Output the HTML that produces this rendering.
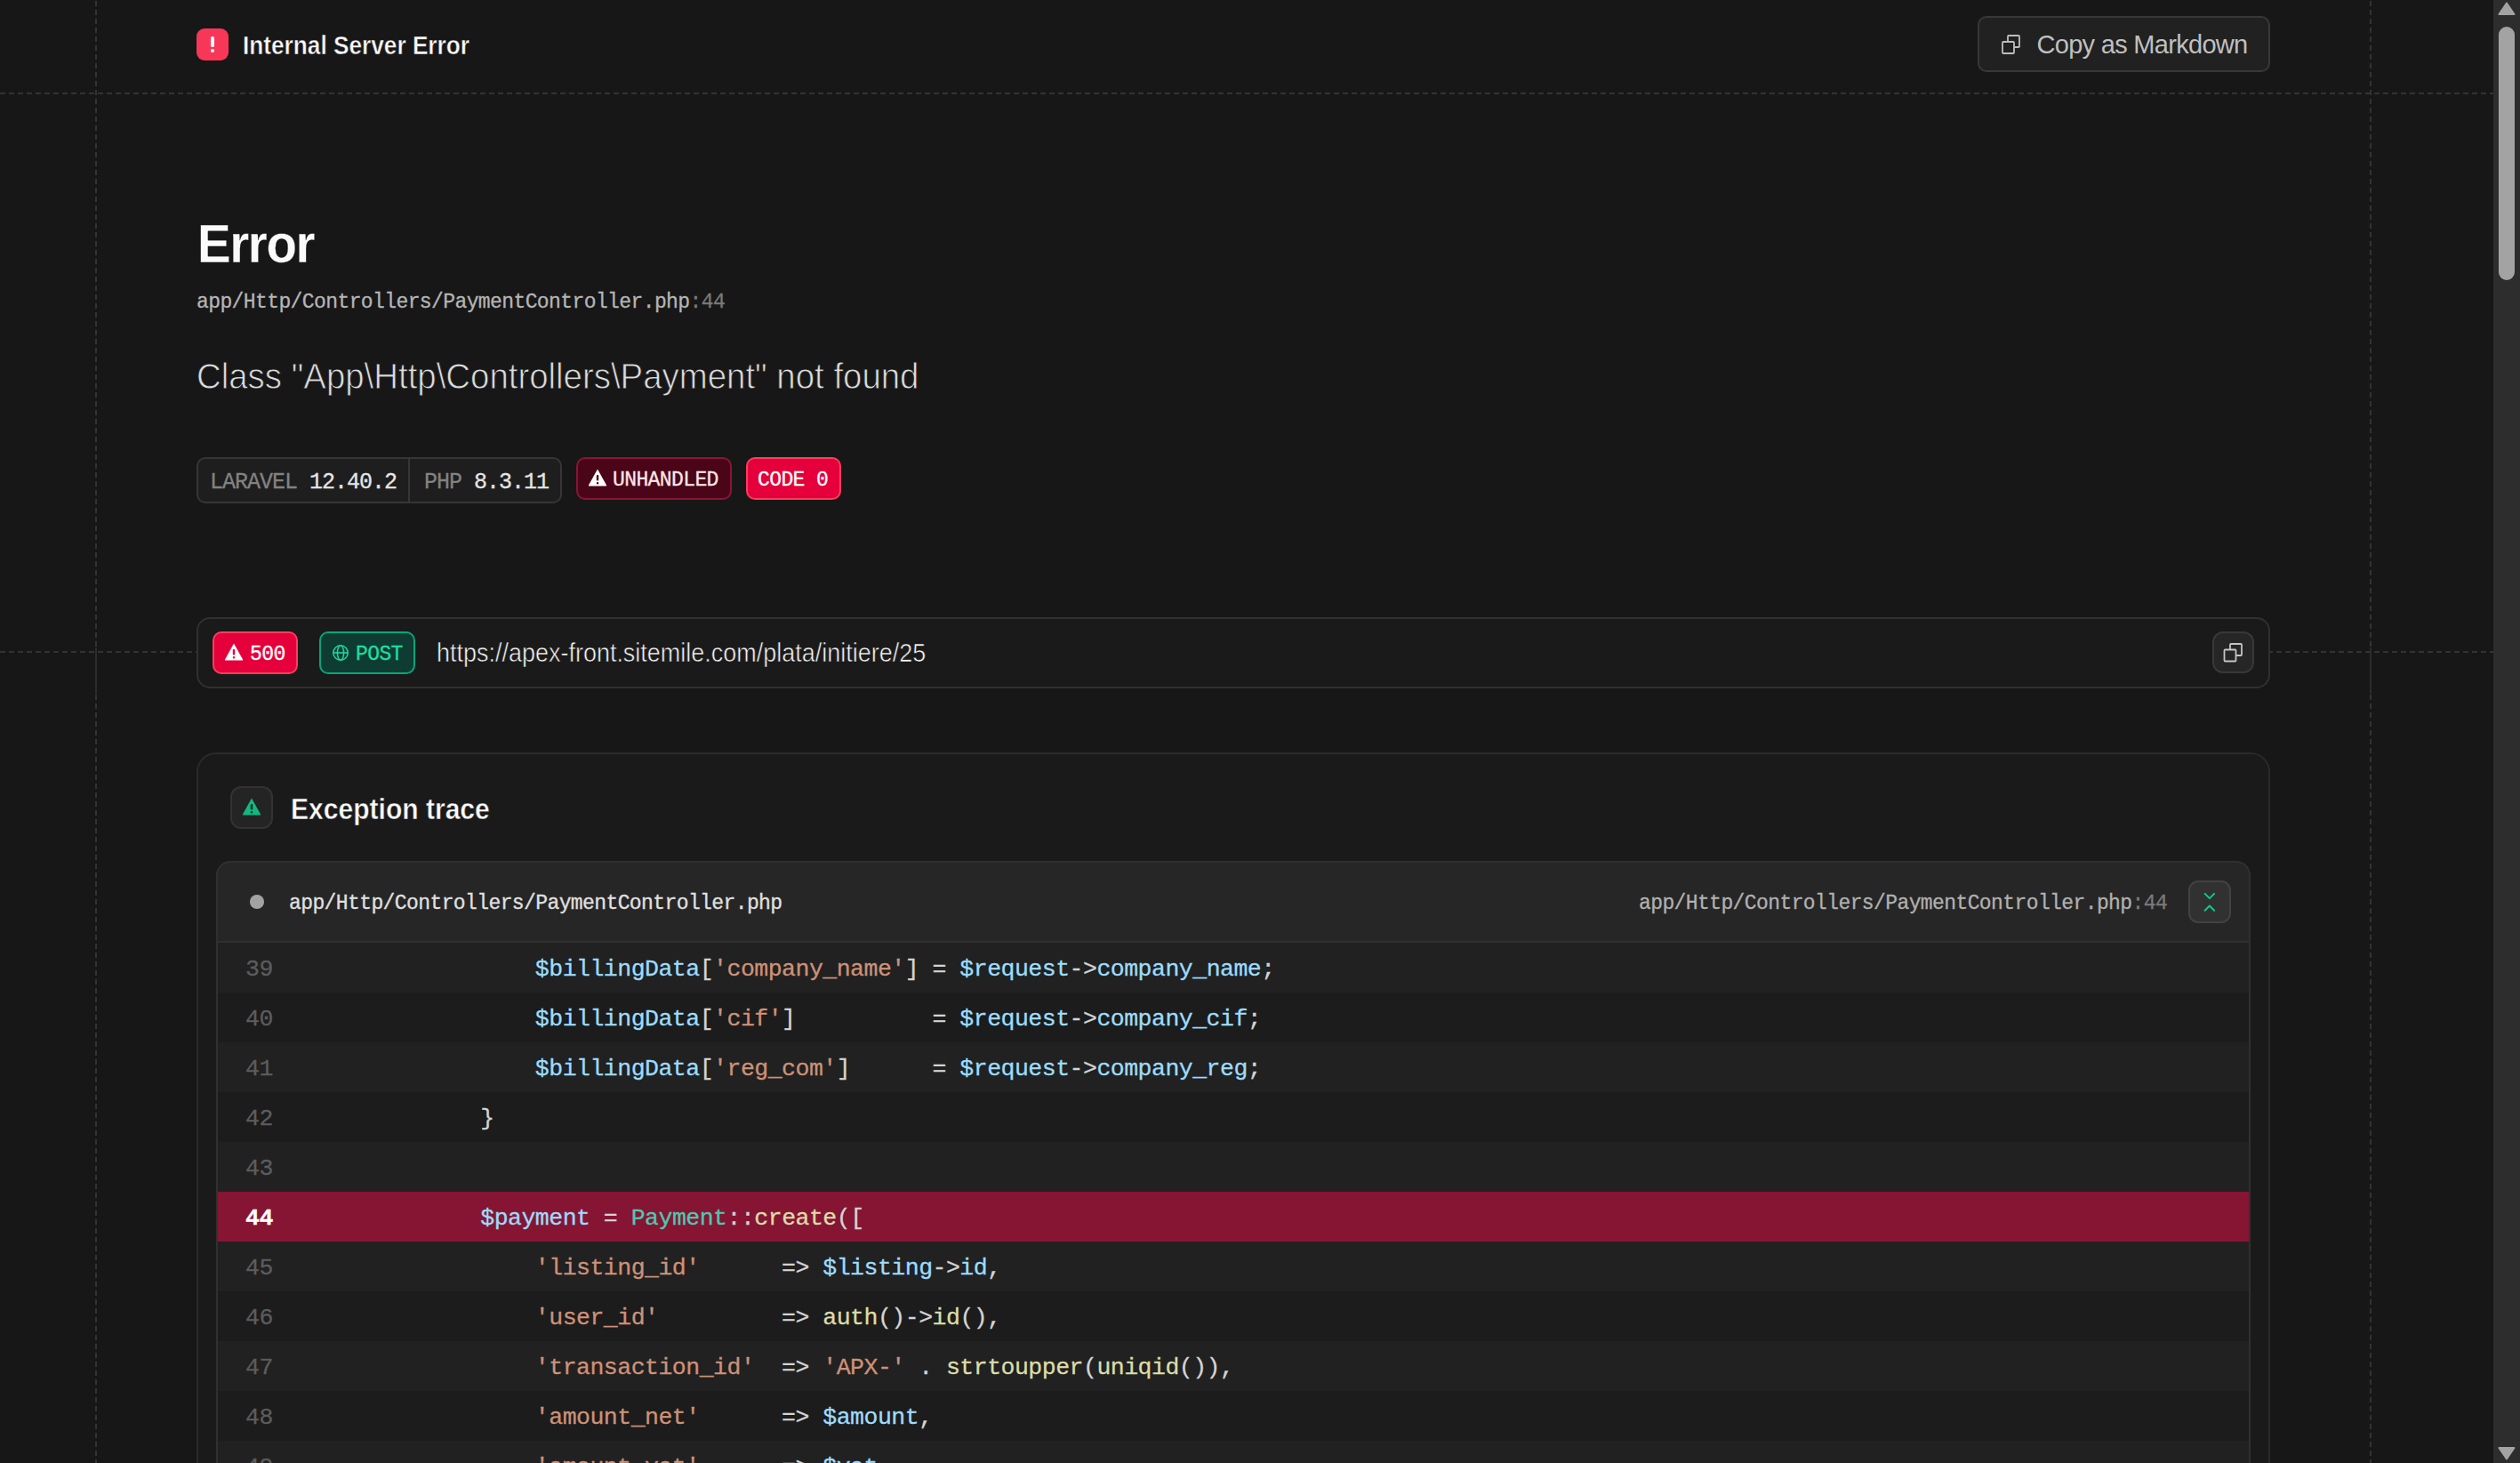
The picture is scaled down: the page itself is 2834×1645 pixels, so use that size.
<!DOCTYPE html>
<html>
<head>
<meta charset="utf-8">
<style>
html,body{margin:0;padding:0;}
body{width:2834px;height:1645px;overflow:hidden;background:#171717;position:relative;font-family:"Liberation Sans",sans-serif;}
.a{position:absolute;}
.t{position:absolute;white-space:pre;}
.mono{font-family:"Liberation Mono",monospace;-webkit-text-stroke:0.3px currentColor;}
.vd{position:absolute;width:2px;background:repeating-linear-gradient(to bottom,#333 0 6px,transparent 6px 10px);}
.hd{position:absolute;height:2px;background:repeating-linear-gradient(to right,#333 0 6px,transparent 6px 10px);}
.row{position:absolute;left:0;right:0;height:56px;}
.ln{position:absolute;left:31px;top:2px;line-height:56px;font-family:"Liberation Mono",monospace;font-size:26.5px;letter-spacing:-0.5px;color:#5c5c5c;white-space:pre;-webkit-text-stroke:0.3px currentColor;}
.cd{position:absolute;left:172px;top:2px;line-height:56px;font-family:"Liberation Mono",monospace;font-size:26.5px;letter-spacing:-0.5px;color:#d4d4d4;white-space:pre;-webkit-text-stroke:0.3px currentColor;}
.v{color:#9cdcfe}.s{color:#ce9178}.f{color:#dcdcaa}.c{color:#4ec9b0}
</style>
</head>
<body>
<!-- grid lines -->
<div class="vd" style="left:107px;top:1px;height:1644px;"></div>
<div class="vd" style="left:2665px;top:1px;height:1644px;"></div>
<div class="hd" style="left:0;top:104px;width:2804px;"></div>
<div class="hd" style="left:0;top:732px;width:2804px;"></div>
<div class="a" style="left:107px;top:728px;width:2px;height:52px;background:#2c2c2c;"></div>
<div class="a" style="left:2665px;top:728px;width:2px;height:52px;background:#2c2c2c;"></div>

<!-- header -->
<div class="a" style="left:221px;top:32px;width:36px;height:36px;border-radius:9px;background:#f83758;">
  <div class="a" style="left:16.3px;top:9.3px;width:3.4px;height:11.5px;border-radius:1.7px;background:#fff;"></div>
  <div class="a" style="left:15.9px;top:23px;width:4.2px;height:4.2px;border-radius:50%;background:#fff;"></div>
</div>
<div class="t" style="left:273px;top:37px;font-size:29px;line-height:29px;font-weight:700;color:#fafafa;transform:scaleX(0.904);transform-origin:0 0;-webkit-text-stroke:0.5px #171717;">Internal Server Error</div>

<div class="a" style="left:2224px;top:18px;width:325px;height:59px;border:2px solid #383838;border-radius:10px;background:#212121;"></div>
<svg class="a" style="left:2249px;top:38px;" width="26" height="26" viewBox="0 0 26 26" fill="none" stroke="#bdbdbd" stroke-width="1.8">
  <rect x="9" y="2" width="13" height="13" rx="1"/>
  <rect x="3" y="9" width="13" height="13" rx="1" fill="#212121"/>
</svg>
<div class="t" style="left:2290.5px;top:36px;font-size:29px;line-height:29px;color:#bfbfbf;letter-spacing:-0.7px;">Copy as Markdown</div>

<!-- title -->
<div class="t" style="left:222px;top:243px;font-size:62px;line-height:62px;font-weight:700;color:#fafafa;letter-spacing:-1.5px;transform:scaleX(0.91);transform-origin:0 0;-webkit-text-stroke:0.3px #171717;">Error</div>
<div class="t mono" style="left:221px;top:329px;font-size:23px;line-height:23px;color:#b5b5b5;letter-spacing:-0.6px;">app/Http/Controllers/PaymentController.php<span style="color:#7a7a7a">:44</span></div>
<div class="t" style="left:221px;top:402px;font-size:41.5px;line-height:41.5px;color:#dcdcdc;transform:scaleX(0.925);transform-origin:0 0;-webkit-text-stroke:0.9px #171717;">Class "App\Http\Controllers\Payment" not found</div>

<!-- badges -->
<div class="a" style="left:221px;top:514px;width:407px;height:48px;border:2px solid #363636;border-radius:10px;background:#1e1e1e;"></div>
<div class="a" style="left:459px;top:516px;width:2px;height:48px;background:#363636;"></div>
<div class="t mono" style="left:236px;top:530px;font-size:25px;line-height:25px;color:#828282;letter-spacing:-1px;">LARAVEL <span style="color:#e5e5e5">12.40.2</span></div>
<div class="t mono" style="left:477px;top:530px;font-size:25px;line-height:25px;color:#828282;letter-spacing:-1px;">PHP <span style="color:#e5e5e5">8.3.11</span></div>

<div class="a" style="left:648px;top:514px;width:171px;height:44px;border:2px solid #8a1538;border-radius:10px;background:#4a0519;"></div>
<svg class="a" style="left:661px;top:527px;" width="22" height="21" viewBox="0 0 22 21">
  <path d="M11 0.6 L21 18.6 Q21.5 19.6 20.4 19.6 L1.6 19.6 Q0.5 19.6 1 18.6 Z" fill="#ffffff"/>
  <rect x="9.8" y="7" width="2.4" height="6.5" rx="1" fill="#4a0519"/>
  <rect x="9.8" y="15" width="2.4" height="2.4" rx="1" fill="#4a0519"/>
</svg>
<div class="t mono" style="left:689px;top:529px;font-size:23px;line-height:23px;color:#ffe4e6;letter-spacing:-0.6px;">UNHANDLED</div>

<div class="a" style="left:839px;top:514px;width:103px;height:44px;border:2px solid #ff3d5f;border-radius:10px;background:#e6003b;"></div>
<div class="t mono" style="left:852px;top:529px;font-size:23px;line-height:23px;color:#ffffff;letter-spacing:-0.6px;">CODE 0</div>

<!-- url bar -->
<div class="a" style="left:221px;top:694px;width:2328px;height:76px;border:2px solid #303030;border-radius:15px;background:#1a1a1a;"></div>
<div class="a" style="left:239px;top:710px;width:92px;height:44px;border:2px solid #ff3d5f;border-radius:10px;background:#e6003b;"></div>
<svg class="a" style="left:252px;top:723px;" width="22" height="21" viewBox="0 0 22 21">
  <path d="M11 0.6 L21 18.6 Q21.5 19.6 20.4 19.6 L1.6 19.6 Q0.5 19.6 1 18.6 Z" fill="#ffffff"/>
  <rect x="9.8" y="7" width="2.4" height="6.5" rx="1" fill="#e6003b"/>
  <rect x="9.8" y="15" width="2.4" height="2.4" rx="1" fill="#e6003b"/>
</svg>
<div class="t mono" style="left:281px;top:725px;font-size:23px;line-height:23px;color:#ffffff;letter-spacing:-0.6px;">500</div>

<div class="a" style="left:359px;top:710px;width:104px;height:44px;border:2px solid #05a77a;border-radius:10px;background:#0f3c32;"></div>
<svg class="a" style="left:373px;top:724px;" width="20" height="20" viewBox="0 0 20 20" fill="none" stroke="#1fd39b" stroke-width="1.6">
  <circle cx="10" cy="10" r="8.2"/>
  <ellipse cx="10" cy="10" rx="3.6" ry="8.2"/>
  <line x1="1.8" y1="10" x2="18.2" y2="10"/>
</svg>
<div class="t mono" style="left:400px;top:725px;font-size:23px;line-height:23px;color:#1fdea2;letter-spacing:-0.6px;">POST</div>

<div class="t" style="left:491px;top:720px;font-size:29px;line-height:29px;color:#f5f5f5;transform:scaleX(0.93);transform-origin:0 0;-webkit-text-stroke:0.6px #1a1a1a;">https://apex-front.sitemile.com/plata/initiere/25</div>

<div class="a" style="left:2488px;top:710px;width:43px;height:43px;border:2px solid #383838;border-radius:12px;background:#262626;"></div>
<svg class="a" style="left:2499px;top:722px;" width="24" height="24" viewBox="0 0 24 24" fill="none" stroke="#c4c4c4" stroke-width="1.8">
  <rect x="9" y="2" width="13" height="13" rx="1"/>
  <rect x="2.5" y="8.5" width="13" height="13" rx="1" fill="#262626"/>
</svg>

<!-- exception trace card -->
<div class="a" style="left:221px;top:846px;width:2328px;height:900px;border:2px solid #2a2a2a;border-radius:22px;background:#1a1a1a;"></div>
<div class="a" style="left:259px;top:884px;width:44px;height:44px;border:2px solid #333;border-radius:12px;background:#242424;"></div>
<svg class="a" style="left:272px;top:897px;" width="22" height="21" viewBox="0 0 22 21">
  <path d="M11 0.6 L21 18.6 Q21.5 19.6 20.4 19.6 L1.6 19.6 Q0.5 19.6 1 18.6 Z" fill="#10b981"/>
  <rect x="9.8" y="7" width="2.4" height="6.5" rx="1" fill="#242424"/>
  <rect x="9.8" y="15" width="2.4" height="2.4" rx="1" fill="#242424"/>
</svg>
<div class="t" style="left:327px;top:893px;font-size:33.7px;line-height:33.7px;font-weight:700;color:#fafafa;transform:scaleX(0.892);transform-origin:0 0;-webkit-text-stroke:0.5px #1a1a1a;">Exception trace</div>

<!-- frame -->
<div class="a" style="left:243px;top:968px;width:2284px;height:800px;border:2px solid #303030;border-radius:16px;background:#262626;overflow:hidden;">
  <div class="a" style="left:0;top:88px;width:100%;height:2px;background:#303030;"></div>
  <div class="a" style="left:36px;top:36px;width:16px;height:16px;border-radius:50%;background:#a3a3a3;"></div>
  <div class="t mono" style="left:80px;top:35px;font-size:23px;line-height:23px;color:#e0e0e0;letter-spacing:-0.6px;">app/Http/Controllers/PaymentController.php</div>
  <div class="t mono" style="left:1598px;top:35px;font-size:23px;line-height:23px;color:#b0b0b0;letter-spacing:-0.6px;">app/Http/Controllers/PaymentController.php<span style="color:#7a7a7a">:44</span></div>
  <div class="a" style="left:2216px;top:20px;width:44px;height:44px;border:2px solid #424242;border-radius:11px;background:#313131;"></div>
  <svg class="a" style="left:2230px;top:30px;" width="22" height="28" viewBox="0 0 22 28" fill="none" stroke="#0cc98f" stroke-width="2" stroke-linecap="round" stroke-linejoin="round">
    <path d="M4.7 4.9 L9.9 10.1 L15.1 4.9"/>
    <path d="M4.7 23.7 L9.9 18.5 L15.1 23.7"/>
  </svg>

  <div class="a" style="left:0;top:90px;width:100%;height:800px;">
    <div class="row" style="top:0;background:#212121;"><div class="ln">39</div><div class="cd">            <span class="v">$billingData</span>[<span class="s">'company_name'</span>] = <span class="v">$request</span>-&gt;<span class="v">company_name</span>;</div></div>
    <div class="row" style="top:56px;background:#1c1c1c;"><div class="ln">40</div><div class="cd">            <span class="v">$billingData</span>[<span class="s">'cif'</span>]          = <span class="v">$request</span>-&gt;<span class="v">company_cif</span>;</div></div>
    <div class="row" style="top:112px;background:#212121;"><div class="ln">41</div><div class="cd">            <span class="v">$billingData</span>[<span class="s">'reg_com'</span>]      = <span class="v">$request</span>-&gt;<span class="v">company_reg</span>;</div></div>
    <div class="row" style="top:168px;background:#1c1c1c;"><div class="ln">42</div><div class="cd">        }</div></div>
    <div class="row" style="top:224px;background:#212121;"><div class="ln">43</div><div class="cd"></div></div>
    <div class="row" style="top:280px;background:#861533;"><div class="ln" style="color:#fff;font-weight:700;">44</div><div class="cd">        <span class="v">$payment</span> = <span class="c">Payment</span>::<span class="f">create</span>([</div></div>
    <div class="row" style="top:336px;background:#212121;"><div class="ln">45</div><div class="cd">            <span class="s">'listing_id'</span>      =&gt; <span class="v">$listing</span>-&gt;<span class="v">id</span>,</div></div>
    <div class="row" style="top:392px;background:#1c1c1c;"><div class="ln">46</div><div class="cd">            <span class="s">'user_id'</span>         =&gt; <span class="f">auth</span>()-&gt;<span class="f">id</span>(),</div></div>
    <div class="row" style="top:448px;background:#212121;"><div class="ln">47</div><div class="cd">            <span class="s">'transaction_id'</span>  =&gt; <span class="s">'APX-'</span> . <span class="f">strtoupper</span>(<span class="f">uniqid</span>()),</div></div>
    <div class="row" style="top:504px;background:#1c1c1c;"><div class="ln">48</div><div class="cd">            <span class="s">'amount_net'</span>      =&gt; <span class="v">$amount</span>,</div></div>
    <div class="row" style="top:560px;background:#212121;"><div class="ln">49</div><div class="cd">            <span class="s">'amount_vat'</span>      =&gt; <span class="v">$vat</span>,</div></div>
  </div>
</div>

<!-- scrollbar -->
<div class="a" style="left:2804px;top:0;width:30px;height:1645px;background:#2d2d2d;"></div>
<div class="a" style="left:2810px;top:30px;width:18px;height:285px;border-radius:9px;background:#a3a3a3;"></div>
<svg class="a" style="left:2808px;top:1px;" width="22" height="18" viewBox="0 0 22 18"><path d="M11 2.5 L19.5 15 L2.5 15 Z" fill="#a3a3a3" stroke="#a3a3a3" stroke-width="2" stroke-linejoin="round"/></svg>
<svg class="a" style="left:2808px;top:1625px;" width="22" height="18" viewBox="0 0 22 18"><path d="M11 15.5 L19.5 3 L2.5 3 Z" fill="#a3a3a3" stroke="#a3a3a3" stroke-width="2" stroke-linejoin="round"/></svg>
</body>
</html>
